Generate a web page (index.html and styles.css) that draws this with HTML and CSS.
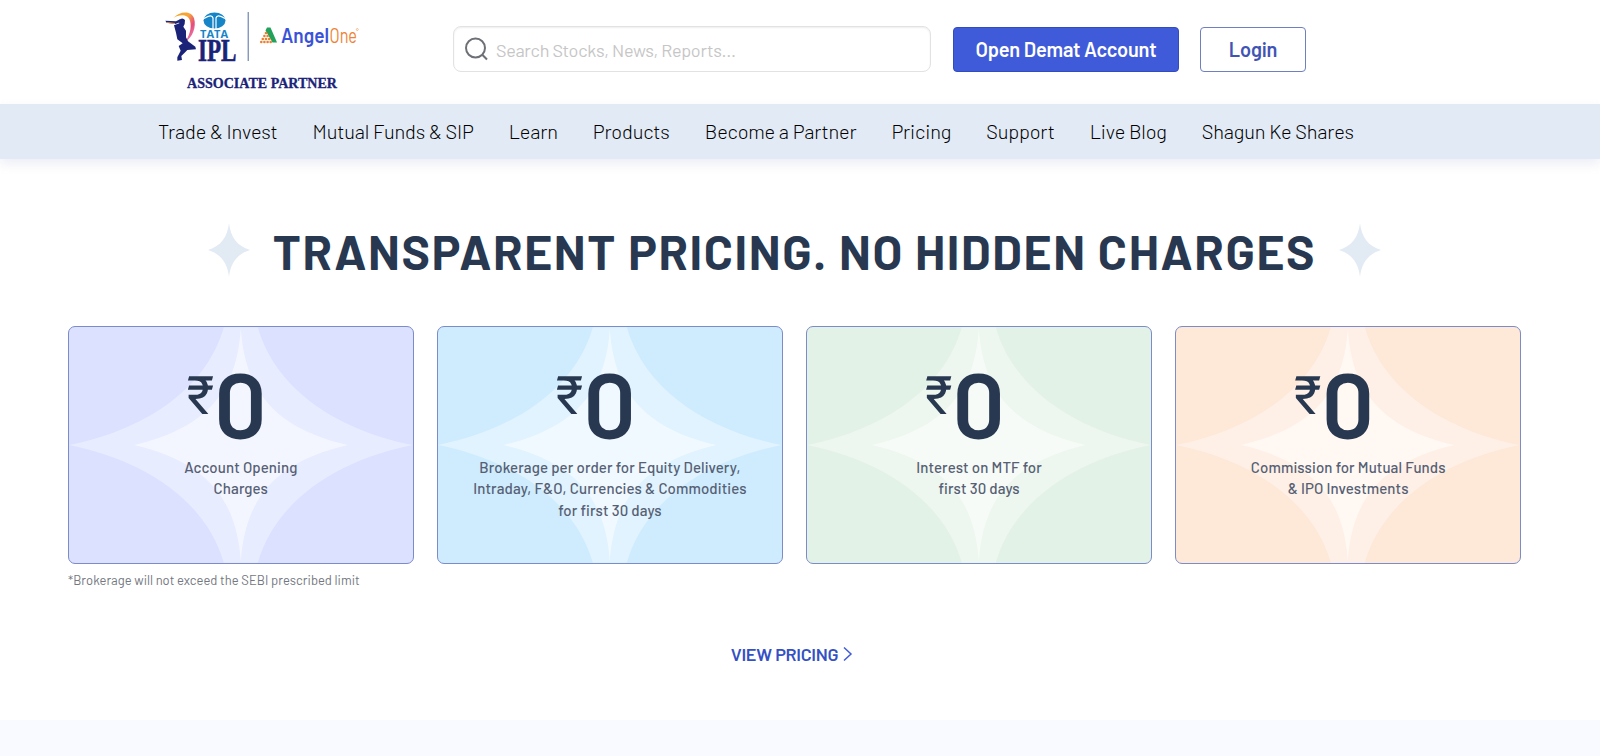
FILE: index.html
```html
<!DOCTYPE html>
<html lang="en">
<head>
  <meta charset="UTF-8">
  <meta name="viewport" content="width=device-width, initial-scale=1.0">
  <title>Angel One - Pricing</title>
  <link rel="stylesheet" href="styles.css">
</head>
<body>
  <!-- shapes used more than once -->
  <svg class="defs" width="0" height="0">
    <symbol id="star" viewBox="0 0 42 54">
      <path d="M21 0C22.500 14 29 23 42 27C29 31 22.500 40 21 54C19.500 40 13 31 0 27C13 23 19.500 14 21 0Z"/>
    </symbol>
    <symbol id="card-star" viewBox="0 0 344 236">
      <path opacity=".36" d="M0 118C70 104 136 66 155 0H189C208 66 274 104 344 118C274 132 208 170 189 236H155C136 170 70 132 0 118Z"/>
      <path opacity=".52" d="M172 1C176 64 206 101 279 118C206 135 176 172 172 235C168 172 138 135 65 118C138 101 168 64 172 1Z"/>
    </symbol>
  </svg>

  <header class="header">
    <a class="logo" href="#">
      <svg width="210" height="92" viewBox="160 4 210 92">
        <defs>
          <linearGradient id="swoosh" x1="0" y1="0" x2="1" y2="1">
            <stop offset="0" stop-color="#f6a11c"/>
            <stop offset=".4" stop-color="#f6a63a"/>
            <stop offset=".65" stop-color="#e64a7d"/>
            <stop offset="1" stop-color="#e9a5cf"/>
          </linearGradient>
        </defs>
        <!-- batsman -->
        <g transform="translate(150 0) scale(.3333)">
          <path d="M70 54C88 34 122 30 132 54C140 82 128 112 104 128C118 108 126 84 120 62C114 42 88 42 70 54Z" fill="url(#swoosh)"/>
          <path d="M46 62L78 64L90 58L92 66L76 72L50 68Z" fill="#1b2378"/>
          <path d="M50 66L76 69L74 72L52 69Z" fill="#ee9a55"/>
          <path d="M72 76L88 70L86 62Q96 50 105 60L104 72L100 80L108 92L108 112L114 124L136 140L138 148L112 150L104 158L94 168L96 180L82 182L82 172L92 152L86 138L98 130L82 118L78 98Z" fill="#1b2378"/>
        </g>
        <!-- tata -->
        <ellipse cx="214.500" cy="20.500" rx="11" ry="8" fill="#1685c7"/>
        <path d="M204 18.500Q212 13.500 213 18V29M225 18.500Q217 13.500 216 18V29" fill="none" stroke="#fff" stroke-width="1.200"/>
        <text class="logo-tata" x="200" y="37.500" textLength="28" lengthAdjust="spacingAndGlyphs">TATA</text>
        <text class="logo-ipl" x="198" y="61" textLength="38.500" lengthAdjust="spacingAndGlyphs">IPL</text>
        <path d="M248.200 12V61" stroke="#526d9e" stroke-width="1"/>
        <!-- angel one -->
        <path d="M267 27.500H270.500L277 42.500H272.500L265.500 30.500Z" fill="#21a15a"/>
        <g fill="#ee7d2d">
          <circle cx="266" cy="33" r="1.300"/>
          <circle cx="264.400" cy="36" r="1.300"/><circle cx="267.600" cy="36" r="1.300"/>
          <circle cx="262.800" cy="39" r="1.300"/><circle cx="266" cy="39" r="1.300"/><circle cx="269.200" cy="39" r="1.300"/>
          <circle cx="261.300" cy="42" r="1.300"/><circle cx="264.400" cy="42" r="1.300"/><circle cx="267.600" cy="42" r="1.300"/><circle cx="270.700" cy="42" r="1.300"/>
        </g>
        <text class="logo-angel" x="281" y="42.700" textLength="48" lengthAdjust="spacingAndGlyphs">Angel</text>
        <text class="logo-one" x="329.500" y="42.700" textLength="27.500" lengthAdjust="spacingAndGlyphs">One</text>
        <circle cx="357.300" cy="29.500" r="1" fill="none" stroke="#ee9a55" stroke-width=".6"/>
        <text class="logo-partner" x="187" y="88" textLength="150" lengthAdjust="spacingAndGlyphs">ASSOCIATE PARTNER</text>
      </svg>
    </a>
    <div class="search">
      <svg width="24" height="24" viewBox="0 0 24 24" fill="none" stroke="#6d7076" stroke-width="2">
        <circle cx="10.500" cy="11" r="9.500"/>
        <path d="M17.300 17.800L22 22.500"/>
      </svg>
      <span class="search-text">Search Stocks, News, Reports...</span>
    </div>
    <a class="btn btn-primary" href="#"><span>Open Demat Account</span></a>
    <a class="btn btn-outline" href="#"><span>Login</span></a>
  </header>

  <nav class="nav">
    <a href="#">Trade &amp; Invest</a>
    <a href="#">Mutual Funds &amp; SIP</a>
    <a href="#">Learn</a>
    <a href="#">Products</a>
    <a href="#">Become a Partner</a>
    <a href="#">Pricing</a>
    <a href="#">Support</a>
    <a href="#">Live Blog</a>
    <a href="#">Shagun Ke Shares</a>
  </nav>

  <main class="pricing">
    <div class="title">
      <svg class="title-star" width="42" height="54"><use href="#star"/></svg>
      <h1>TRANSPARENT PRICING. NO HIDDEN CHARGES</h1>
      <svg class="title-star" width="42" height="54"><use href="#star"/></svg>
    </div>

    <div class="cards">
      <div class="card card-violet">
        <svg class="card-bg"><use href="#card-star"/></svg>
        <div class="price"><span class="rupee">₹</span><span class="zero">0</span></div>
        <p>Account Opening<br>Charges</p>
      </div>
      <div class="card card-blue">
        <svg class="card-bg"><use href="#card-star"/></svg>
        <div class="price"><span class="rupee">₹</span><span class="zero">0</span></div>
        <p>Brokerage per order for Equity Delivery,<br>Intraday, F&amp;O, Currencies &amp; Commodities<br>for first 30 days</p>
      </div>
      <div class="card card-green">
        <svg class="card-bg"><use href="#card-star"/></svg>
        <div class="price"><span class="rupee">₹</span><span class="zero">0</span></div>
        <p>Interest on MTF for<br>first 30 days</p>
      </div>
      <div class="card card-orange">
        <svg class="card-bg"><use href="#card-star"/></svg>
        <div class="price"><span class="rupee">₹</span><span class="zero">0</span></div>
        <p>Commission for Mutual Funds<br>&amp; IPO Investments</p>
      </div>
    </div>
    <p class="note">*Brokerage will not exceed the SEBI prescribed limit</p>

    <a class="view-link" href="#">
      <span>VIEW PRICING</span>
      <svg width="10" height="16" viewBox="0 0 10 16" fill="none" stroke="#3f5bd9" stroke-width="1.500"><path d="M1 1.500L8 8L1 14.500"/></svg>
    </a>
  </main>
  <div class="next-section"></div>
</body>
</html>
```
FILE: styles.css
```css
* {
  box-sizing: border-box;
}

body {
  margin: 0;
  height: 756px;
  overflow: hidden;
  display: flex;
  flex-direction: column;
  background: #fff;
  color: #283850;
  font-family: Barlow, Roboto, sans-serif;
}

a {
  text-decoration: none;
}

.defs {
  position: absolute;
}

/* header */
.header {
  height: 104px;
  flex: none;
  display: flex;
  align-items: flex-start;
  padding: 4px 0 0 160px;
}

.logo {
  width: 293px;
  height: 92px;
}

.logo-tata {
  font: 700 11px "Open Sans", sans-serif;
  fill: #1685c7;
}

.logo-ipl {
  font: 700 31px "Liberation Serif", serif;
  fill: #1b2378;
  stroke: #1b2378;
  stroke-width: .6px;
}

.logo-angel {
  font: 600 21px Barlow, Roboto, sans-serif;
  fill: #3a52d8;
}

.logo-one {
  font: 400 21px Barlow, Roboto, sans-serif;
  fill: #ee8336;
}

.logo-partner {
  font: 700 15px "Liberation Serif", serif;
  fill: #1b2378;
  stroke: #1b2378;
  stroke-width: .3px;
}

.search {
  width: 478px;
  height: 46px;
  margin: 22px 22px 0 0;
  padding-left: 11px;
  display: flex;
  align-items: center;
  gap: 7px;
  border: 1px solid #e2e2e2;
  border-radius: 8px;
  box-shadow: inset 0 1px 2px #eee;
}

.search-text {
  padding-top: 2px;
  font-size: 18px;
  letter-spacing: -.28px;
  color: #c6c6c6;
}

.btn {
  height: 45px;
  margin-top: 23px;
  padding-bottom: 1px;
  display: flex;
  align-items: center;
  justify-content: center;
  border-radius: 4px;
  font-size: 20px;
  font-weight: 600;
}

.btn-primary {
  width: 226px;
  margin-right: 21px;
  background: #3f5bd9;
  border: 1px solid #324bbd;
  color: #fff;
  letter-spacing: -.22px;
}

.btn-outline {
  width: 106px;
  border: 1px solid #6f7fc0;
  color: #3f54b5;
  letter-spacing: -.2px;
}

/* nav */
.nav {
  height: 55px;
  flex: none;
  display: flex;
  align-items: center;
  gap: 35px;
  padding: 0 0 2px 158px;
  background: #e2eaf5;
  box-shadow: 0 5px 10px rgba(140, 150, 200, .16);
}

.nav a {
  font-size: 20px;
  font-weight: 300;
  letter-spacing: -.16px;
  white-space: nowrap;
  color: #000;
}

/* pricing */
.pricing {
  height: 561px;
  flex: none;
  display: flex;
  flex-direction: column;
  padding: 64px 79px 0 68px;
}

.title {
  display: flex;
  align-items: center;
  justify-content: center;
  gap: 22.500px;
  height: 54px;
}

.title-star {
  flex: none;
  fill: #e2eaf4;
}

.title h1 {
  margin: 0;
  padding-top: 2px;
  font-size: 48px;
  line-height: 54px;
  font-weight: 700;
  letter-spacing: 1.600px;
  white-space: nowrap;
}

.cards {
  display: grid;
  grid-template-columns: repeat(4, 1fr);
  gap: 23.500px;
  margin-top: 49px;
}

.card {
  position: relative;
  height: 238px;
  padding-top: 45px;
  border: 1px solid #7c8bc9;
  border-radius: 7px;
  overflow: hidden;
  text-align: center;
}

.card-violet { background: #dce1ff; }
.card-blue { background: #cfecfe; }
.card-green { background: #e3f2e6; }
.card-orange { background: #fee8d8; }

.card-bg {
  position: absolute;
  top: 0;
  left: 0;
  width: 100%;
  height: 100%;
  fill: #fff;
}

.price {
  position: relative;
  height: 68px;
  display: flex;
  justify-content: center;
  align-items: flex-start;
  padding-right: 28px;
}

.rupee {
  font-size: 53px;
  line-height: 42px;
  font-weight: 400;
}

.zero {
  font-size: 93px;
  line-height: 60px;
  font-weight: 600;
}

.card p {
  position: relative;
  margin: 17px 0 0;
  font-size: 15px;
  line-height: 21.300px;
  font-weight: 500;
  letter-spacing: .1px;
  color: #566074;
  white-space: nowrap;
}

.note {
  margin: 8px 0 0;
  font-size: 13px;
  line-height: 16px;
  letter-spacing: .02px;
  color: #737780;
}

.view-link {
  display: flex;
  align-items: center;
  align-self: center;
  gap: 5px;
  margin: 55px 5px 0 0;
  font-size: 18px;
  line-height: 22px;
  font-weight: 600;
  letter-spacing: -.3px;
  color: #3450c4;
}

.next-section {
  flex: 1;
  background: #f9faff;
}
```
